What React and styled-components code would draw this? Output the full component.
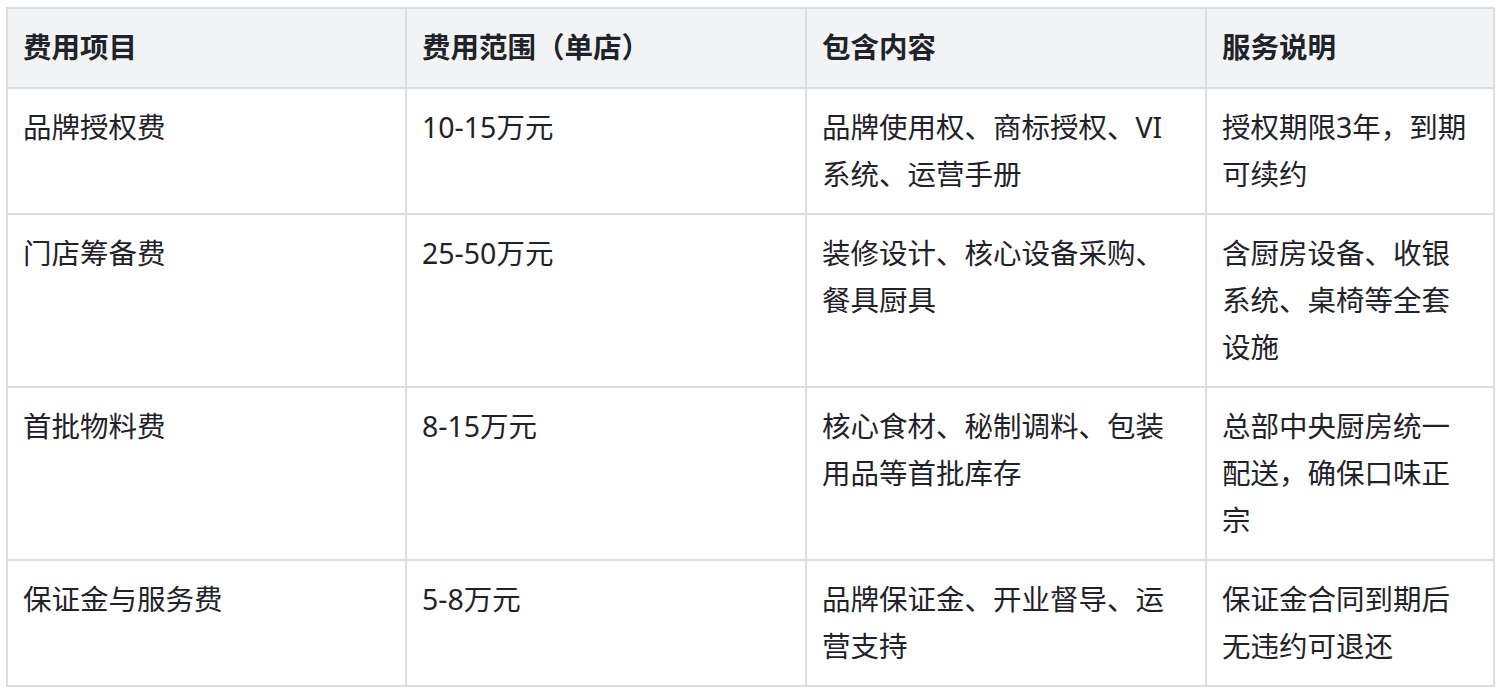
import React from "react";
import styled, { createGlobalStyle } from "styled-components";

const GlobalStyle = createGlobalStyle`
  html, body { margin: 0; padding: 0; background: #ffffff; }
  body { font-family: "Noto Sans", "Noto Sans CJK SC", sans-serif; color: #1f2329; }
`;

const Page = styled.div`
  padding: 7px 7px 0 6px;
`;

const Table = styled.table`
  width: 1487px;
  table-layout: fixed;
  border-collapse: collapse;
  font-family: "Noto Sans", "Noto Sans CJK SC", sans-serif;
  font-size: 28.5px;
  line-height: 47px;
  color: #1f2329;
`;

const Col = styled.col`
  width: ${(p) => p.$w}px;
`;

const Th = styled.th`
  background: #f2f3f5;
  border: 2px solid #dcdde0;
  padding: 15px 17px 16px 15px;
  text-align: left;
  font-weight: 700;
  vertical-align: top;
`;

const Td = styled.td`
  border: 2px solid #dcdde0;
  padding: 15px 17px 15px 15px;
  text-align: left;
  vertical-align: top;
  font-weight: 400;
`;

const headers = ["费用项目", "费用范围（单店）", "包含内容", "服务说明"];
const rows = [
  ["品牌授权费", "10-15万元", "品牌使用权、商标授权、VI系统、运营手册", "授权期限3年，到期可续约"],
  ["门店筹备费", "25-50万元", "装修设计、核心设备采购、餐具厨具", "含厨房设备、收银系统、桌椅等全套设施"],
  ["首批物料费", "8-15万元", "核心食材、秘制调料、包装用品等首批库存", "总部中央厨房统一配送，确保口味正宗"],
  ["保证金与服务费", "5-8万元", "品牌保证金、开业督导、运营支持", "保证金合同到期后无违约可退还"],
];

export default function App() {
  return (
    <>
      <GlobalStyle />
      <Page>
        <Table>
          <colgroup>
            <Col $w={399} />
            <Col $w={400} />
            <Col $w={400} />
            <Col $w={288} />
          </colgroup>
          <thead>
            <tr>
              {headers.map((h) => (
                <Th key={h}>{h}</Th>
              ))}
            </tr>
          </thead>
          <tbody>
            {rows.map((r) => (
              <tr key={r[0]}>
                {r.map((c, i) => (
                  <Td key={i}>{c}</Td>
                ))}
              </tr>
            ))}
          </tbody>
        </Table>
      </Page>
    </>
  );
}
